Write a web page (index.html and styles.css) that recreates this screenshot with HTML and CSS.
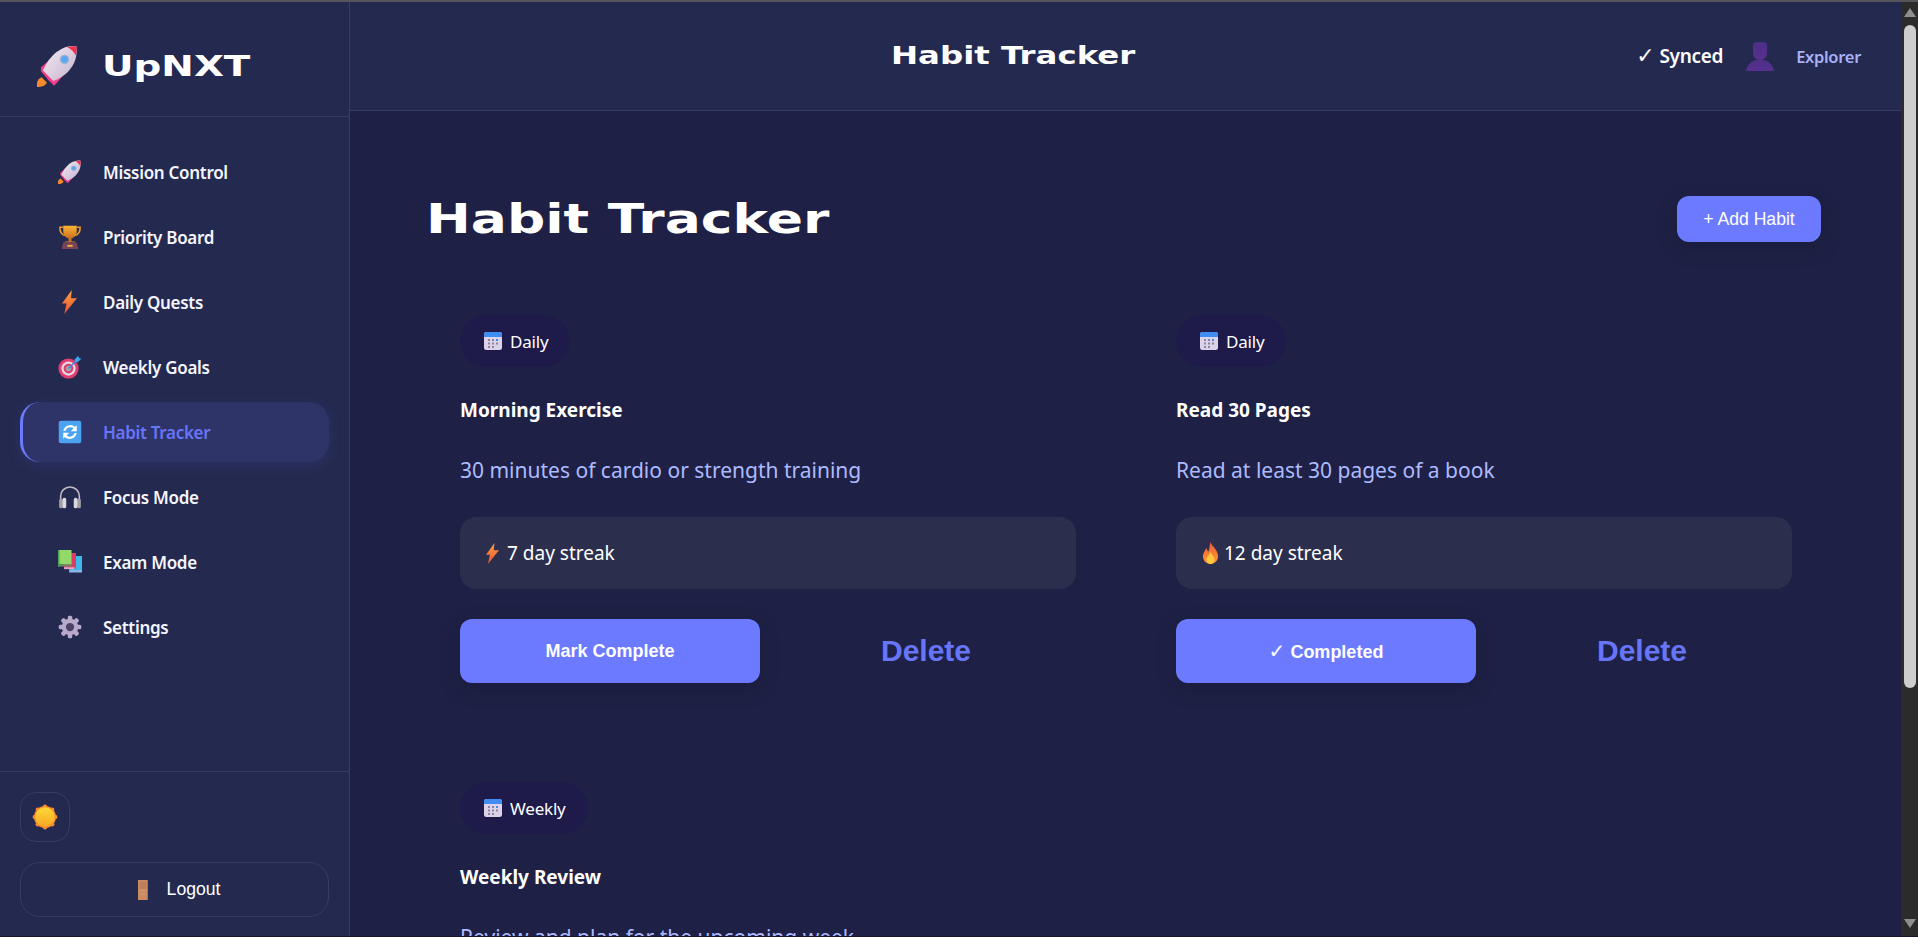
FILE: index.html
```html
<!DOCTYPE html>
<html lang="en">
<head>
    <meta charset="UTF-8">
    <meta name="viewport" content="width=device-width, initial-scale=1.0">
    <title>UpNXT - Habit Tracker</title>
    <link rel="stylesheet" href="styles.css">
</head>
<body>
    <svg class="icon-defs" xmlns="http://www.w3.org/2000/svg">
        <defs>
            <linearGradient id="g-body" x1="0" y1="0" x2="1" y2="1"><stop offset="0" stop-color="#f4ecf4"/><stop offset="1" stop-color="#c4b2cc"/></linearGradient>
            <linearGradient id="g-bolt" x1="0" y1="0" x2="0" y2="1"><stop offset="0" stop-color="#ffa23a"/><stop offset="1" stop-color="#e8503a"/></linearGradient>
            <linearGradient id="g-gold" x1="0" y1="0" x2="0" y2="1"><stop offset="0" stop-color="#fcb437"/><stop offset="1" stop-color="#c9701c"/></linearGradient>
            <linearGradient id="g-sun" x1="0" y1="0" x2="0" y2="1"><stop offset="0" stop-color="#fdd835"/><stop offset="1" stop-color="#f9a825"/></linearGradient>
            <linearGradient id="g-flame" x1="0" y1="0" x2="0" y2="1"><stop offset="0" stop-color="#ef5a3c"/><stop offset="1" stop-color="#ff9a2e"/></linearGradient>
            <linearGradient id="g-user" x1="0" y1="0" x2="0" y2="1"><stop offset="0" stop-color="#4d2e86"/><stop offset="1" stop-color="#57308f"/></linearGradient>
        </defs>
        <symbol id="i-rocket" viewBox="0 0 32 32">
            <path d="M0 32c-.5-3.500 .5-6.500 3.500-7.500l4 4c-1 2.500-4 3.500-7.500 3.500z" fill="#f58a2a"/>
            <path d="M3 17l7-6-1 10 3 3-3 3-6-7z" fill="#f23d86"/>
            <path d="M15 29l6-7-10 1-3 3 5 5z" fill="#ef3f8e"/>
            <path d="M30 1c1 7-1 14-6.500 19.500C20 24 16 26 12.500 27.500l-8-8C6 16 8 12 11.500 8.500 17 3 23 0 30 1z" fill="url(#g-body)"/>
            <path d="M23 1.800c2.300-.8 4.700-1.100 7-.8 .4 2.300 .2 4.700-.5 7-1.200-2.600-3.500-4.900-6.500-6.200z" fill="#f0304f"/>
            <circle cx="21" cy="11" r="3.600" fill="#9fb0d8"/>
            <circle cx="21" cy="11" r="2.600" fill="#5aa9f0"/>
        </symbol>
        <symbol id="i-trophy" viewBox="0 0 32 32">
            <path d="M7 3H2.500c0 7 2 10 7 11M25 3h4.500c0 7-2 10-7 11" fill="none" stroke="#e79a28" stroke-width="2.200"/>
            <path d="M7 1h18v7c0 6-4 10-9 10S7 14 7 8z" fill="url(#g-gold)"/>
            <rect x="14" y="17" width="4" height="5" fill="#c9701c"/>
            <path d="M10 22h12l1 1H9z" fill="#e79a28"/>
            <path d="M7 23h18l2 9H5z" fill="#7a4258"/>
            <rect x="12.500" y="26.500" width="7" height="2.500" fill="#f2b33d"/>
        </symbol>
        <symbol id="i-bolt" viewBox="0 0 20 32">
            <path d="M13 0L0 18h6L3 32l17-21h-8z" fill="url(#g-bolt)"/>
        </symbol>
        <symbol id="i-target" viewBox="0 0 32 32">
            <circle cx="14" cy="18" r="13.500" fill="#e23d6f"/>
            <circle cx="14" cy="18" r="9.500" fill="#e6dbe6"/>
            <circle cx="14" cy="18" r="6.500" fill="#d9446f"/>
            <circle cx="14" cy="18" r="3.500" fill="#a9a1b0"/>
            <path d="M14 18L27 5" stroke="#3f8fd8" stroke-width="2.200"/>
            <path d="M22 6l5-5 1 3 3 1-5 5-3-1z" fill="#3fa4ee"/>
        </symbol>
        <symbol id="i-sync" viewBox="0 0 32 32">
            <rect x="1" y="1" width="30" height="30" rx="3" fill="#4ba3f2"/>
            <path d="M8.500 14.500a8 7.500 0 0 1 13.500-4" fill="none" stroke="#fff" stroke-width="3"/>
            <path d="M25 7v8h-8z" fill="#fff"/>
            <path d="M23.500 17.500a8 7.500 0 0 1-13.500 4" fill="none" stroke="#fff" stroke-width="3"/>
            <path d="M7 25v-8h8z" fill="#fff"/>
        </symbol>
        <symbol id="i-headphones" viewBox="0 0 32 32">
            <path d="M3.500 21V15a12.500 12.500 0 0 1 25 0v6" fill="none" stroke="#c4c0c8" stroke-width="2"/>
            <rect x="1.500" y="18" width="5" height="13" rx="2.500" fill="#a09da6"/>
            <rect x="25.500" y="18" width="5" height="13" rx="2.500" fill="#a09da6"/>
            <rect x="6" y="17" width="5" height="14" rx="2.500" fill="#dcd8de"/>
            <rect x="21" y="17" width="5" height="14" rx="2.500" fill="#dcd8de"/>
        </symbol>
        <symbol id="i-books" viewBox="0 0 32 32">
            <rect x="15" y="8" width="17" height="21" fill="#3fb8ea"/>
            <rect x="15" y="27" width="17" height="3" fill="#8fb6e4"/>
            <rect x="8" y="4" width="16" height="21" fill="#dc3b68"/>
            <rect x="8" y="23" width="14" height="2.500" fill="#e6a5c0"/>
            <rect x="0" y="0" width="18" height="19" fill="#93d96a"/>
            <rect x="0" y="19" width="18" height="3" fill="#6d8f60"/>
            <rect x="0" y="0" width="2" height="22" fill="#4da35a"/>
        </symbol>
        <symbol id="i-gear" viewBox="0 0 32 32">
            <g fill="#b9aacb">
                <rect x="13" y="1" width="6" height="30" rx="2"/>
                <rect x="13" y="1" width="6" height="30" rx="2" transform="rotate(45 16 16)"/>
                <rect x="13" y="1" width="6" height="30" rx="2" transform="rotate(90 16 16)"/>
                <rect x="13" y="1" width="6" height="30" rx="2" transform="rotate(135 16 16)"/>
                <circle cx="16" cy="16" r="11"/>
            </g>
            <circle cx="16" cy="16" r="5.500" fill="#4c4468"/>
        </symbol>
        <symbol id="i-sun" viewBox="0 0 32 32">
            <g fill="#f58a2f">
                <circle cx="16" cy="16" r="13.500"/><circle cx="16" cy="3.500" r="2.800"/><circle cx="16" cy="28.500" r="2.800"/><circle cx="3.500" cy="16" r="2.800"/><circle cx="28.500" cy="16" r="2.800"/>
                <circle cx="7.200" cy="7.200" r="2.800"/><circle cx="24.800" cy="7.200" r="2.800"/><circle cx="7.200" cy="24.800" r="2.800"/><circle cx="24.800" cy="24.800" r="2.800"/>
            </g>
            <circle cx="16" cy="16" r="12" fill="url(#g-sun)"/>
        </symbol>
        <symbol id="i-door" viewBox="0 0 14 24">
            <rect x="1" y="0" width="12" height="24" fill="#c98a64"/>
            <rect x="3" y="2" width="8" height="9" fill="#bd7f5b"/>
            <path d="M3 12.500h9M3 17h9" stroke="#e0a278" stroke-width=".8"/>
            <rect x="12" y="0" width="1" height="24" fill="#a86c4a"/>
        </symbol>
        <symbol id="i-calendar" viewBox="0 0 20 20">
            <rect x="1" y="1" width="18" height="18" rx="2.500" fill="#dcd3e8"/>
            <path d="M1 6V3.500A2.500 2.500 0 0 1 3.500 1h13A2.500 2.500 0 0 1 19 3.500V6z" fill="#3f8df0"/>
            <g fill="#8b84a0">
                <rect x="5" y="8" width="2" height="2"/><rect x="9" y="8" width="2" height="2"/><rect x="13" y="8" width="2" height="2" fill="#3f8df0"/>
                <rect x="5" y="11.500" width="2" height="2"/><rect x="9" y="11.500" width="2" height="2"/><rect x="13" y="11.500" width="2" height="2"/>
                <rect x="5" y="15" width="2" height="2"/><rect x="9" y="15" width="2" height="2"/>
            </g>
        </symbol>
        <symbol id="i-flame" viewBox="0 0 16 22">
            <path d="M8 0c1 4 7 7 7.500 13.500C16 18 12.500 22 8 22s-8-4-7.500-8.500C1 10 3 8 4 6c.5 2 1 3 2 3.500C7 7 7 3 8 0z" fill="url(#g-flame)"/>
            <path d="M8 10c1 3 4 4 4 7.500 0 2.500-2 4.500-4 4.500s-4-2-4-4.500C4 15 7 13 8 10z" fill="#ffc93f"/>
        </symbol>
        <symbol id="i-user" viewBox="0 0 28 29">
            <path d="M7 3c0-2 2-3 4-3h6c2 0 4 1 4 3v8c0 4-3 7-7 7s-7-3-7-7z" fill="url(#g-user)"/>
            <path d="M0 29c1-6 5-10 10-11h8c5 1 9 5 10 11z" fill="url(#g-user)"/>
        </symbol>
    </svg>

    <div class="window-edge"></div>
    <div class="window">
        <aside class="sidebar">
            <div class="brand">
                <svg class="brand-icon"><use href="#i-rocket"/></svg>
                <span class="brand-name">UpNXT</span>
            </div>
            <nav class="nav">
                <a class="nav-item"><span class="nav-icon"><svg class="icon-24"><use href="#i-rocket"/></svg></span>Mission Control</a>
                <a class="nav-item"><span class="nav-icon"><svg class="icon-24"><use href="#i-trophy"/></svg></span>Priority Board</a>
                <a class="nav-item"><span class="nav-icon"><svg class="icon-bolt"><use href="#i-bolt"/></svg></span>Daily Quests</a>
                <a class="nav-item"><span class="nav-icon"><svg class="icon-24"><use href="#i-target"/></svg></span>Weekly Goals</a>
                <a class="nav-item active"><span class="nav-icon"><svg class="icon-24"><use href="#i-sync"/></svg></span>Habit Tracker</a>
                <a class="nav-item"><span class="nav-icon"><svg class="icon-24"><use href="#i-headphones"/></svg></span>Focus Mode</a>
                <a class="nav-item"><span class="nav-icon"><svg class="icon-24"><use href="#i-books"/></svg></span>Exam Mode</a>
                <a class="nav-item"><span class="nav-icon"><svg class="icon-24"><use href="#i-gear"/></svg></span>Settings</a>
            </nav>
            <div class="sidebar-footer">
                <button class="theme-btn"><svg class="icon-sun"><use href="#i-sun"/></svg></button>
                <button class="logout-btn"><svg class="icon-door"><use href="#i-door"/></svg>Logout</button>
            </div>
        </aside>

        <div class="main">
            <header class="topbar">
                <div class="topbar-spacer"></div>
                <div class="topbar-title"><span>Habit Tracker</span></div>
                <div class="topbar-right">
                    <span class="synced"><span class="check">✓</span> Synced</span>
                    <svg class="avatar"><use href="#i-user"/></svg>
                    <span class="username">Explorer</span>
                </div>
            </header>

            <main class="content">
                <div class="page-head">
                    <h1 class="page-title"><span>Habit Tracker</span></h1>
                    <button class="add-btn">+ Add Habit</button>
                </div>

                <div class="habit-grid">
                    <section class="habit-card">
                        <span class="pill"><svg class="icon-pill"><use href="#i-calendar"/></svg>Daily</span>
                        <h3 class="habit-name">Morning Exercise</h3>
                        <p class="habit-desc">30 minutes of cardio or strength training</p>
                        <div class="streak"><svg class="icon-streak-bolt"><use href="#i-bolt"/></svg>7 day streak</div>
                        <div class="habit-actions">
                            <button class="complete-btn">Mark Complete</button>
                            <button class="delete-btn">Delete</button>
                        </div>
                    </section>
                    <section class="habit-card">
                        <span class="pill"><svg class="icon-pill"><use href="#i-calendar"/></svg>Daily</span>
                        <h3 class="habit-name">Read 30 Pages</h3>
                        <p class="habit-desc">Read at least 30 pages of a book</p>
                        <div class="streak"><svg class="icon-streak-flame"><use href="#i-flame"/></svg>12 day streak</div>
                        <div class="habit-actions">
                            <button class="complete-btn"><span class="check-bold">✓</span> Completed</button>
                            <button class="delete-btn">Delete</button>
                        </div>
                    </section>
                    <section class="habit-card">
                        <span class="pill"><svg class="icon-pill"><use href="#i-calendar"/></svg>Weekly</span>
                        <h3 class="habit-name">Weekly Review</h3>
                        <p class="habit-desc">Review and plan for the upcoming week</p>
                    </section>
                </div>
            </main>
        </div>

        <div class="scrollbar">
            <span class="arrow-up"></span>
            <span class="thumb"></span>
            <span class="arrow-down"></span>
        </div>
    </div>
    <div class="window-bottom"></div>
</body>
</html>
```

FILE: styles.css
```css
* {
    box-sizing: border-box;
}
html, body {
    height: 100%;
}
body {
    margin: 0;
    display: flex;
    flex-direction: column;
    overflow: hidden;
    background-color: #1e2145;
    color: #ffffff;
    font-family: "Noto Sans", "Open Sans", sans-serif;
}
button {
    font-family: "Liberation Sans", Arial, sans-serif;
    color: #ffffff;
    border: none;
    cursor: pointer;
}
.icon-defs {
    display: block;
    width: 0;
    height: 0;
}
.window-edge {
    height: 2px;
    flex-shrink: 0;
    background-color: #55555a;
}
.window-bottom {
    height: 1px;
    flex-shrink: 0;
    background-color: #15162a;
}
.window {
    flex: 1;
    display: flex;
    min-height: 0;
}

/* sidebar */
.sidebar {
    width: 350px;
    flex-shrink: 0;
    display: flex;
    flex-direction: column;
    background-color: #24294f;
    border-right: 1px solid #383c66;
}
.brand {
    height: 115px;
    flex-shrink: 0;
    display: flex;
    align-items: center;
    padding: 14px 0 0 37px;
    gap: 23px;
    border-bottom: 1px solid #383c66;
}
.brand-icon {
    width: 42px;
    height: 42px;
}
.brand-name {
    font-family: "DejaVu Sans", sans-serif;
    font-weight: 700;
    font-size: 29px;
    transform: scaleX(1.34);
    transform-origin: left center;
}
.nav {
    flex: 1;
    display: flex;
    flex-direction: column;
    gap: 5px;
    padding: 25px 20px 0;
}
.nav-item {
    height: 60px;
    display: flex;
    align-items: center;
    padding-left: 38px;
    border-radius: 20px;
    font-size: 17px;
    font-weight: 600;
    letter-spacing: -0.3px;
    color: #f4f5ff;
}
.nav-item.active {
    background-color: #2f3468;
    color: #6775f8;
    border-left: 3px solid #6c7aff;
    padding-left: 35px;
    box-shadow: 0 4px 15px rgba(108, 122, 255, 0.12);
}
.nav-icon {
    width: 45px;
    display: flex;
    align-items: center;
    flex-shrink: 0;
}
.icon-24 {
    width: 24px;
    height: 24px;
}
.icon-bolt {
    width: 15px;
    height: 24px;
    margin-left: 4px;
}
.sidebar-footer {
    display: flex;
    flex-direction: column;
    align-items: flex-start;
    gap: 20px;
    padding: 20px 20px 19px;
    border-top: 1px solid #383c66;
}
.theme-btn {
    width: 50px;
    height: 50px;
    display: flex;
    align-items: center;
    justify-content: center;
    padding: 0;
    background: transparent;
    border: 1px solid #383c66;
    border-radius: 16px;
}
.icon-sun {
    width: 26px;
    height: 26px;
}
.logout-btn {
    width: 100%;
    height: 55px;
    display: flex;
    align-items: center;
    justify-content: center;
    gap: 17px;
    background: transparent;
    border: 1px solid #383c66;
    border-radius: 20px;
    font-size: 17.6px;
}
.icon-door {
    width: 14px;
    height: 20px;
    margin-left: 7px;
}

/* top bar */
.main {
    flex: 1;
    min-width: 0;
    display: flex;
    flex-direction: column;
}
.topbar {
    height: 109px;
    flex-shrink: 0;
    display: flex;
    align-items: center;
    justify-content: space-between;
    padding: 0 40px;
    background-color: #24294f;
    border-bottom: 1px solid #383c66;
}
.topbar-title {
    width: 244px;
    font-family: "DejaVu Sans", sans-serif;
    font-weight: 700;
    font-size: 24px;
    white-space: nowrap;
}
.topbar-title span {
    display: inline-block;
    transform: scaleX(1.35);
    transform-origin: left center;
}
.topbar-right {
    display: flex;
    align-items: center;
}
.synced {
    font-size: 19px;
    font-weight: 600;
    letter-spacing: -0.3px;
}
.check {
    font-family: "DejaVu Sans", sans-serif;
    font-weight: 400;
    font-size: 22px;
    letter-spacing: 0;
}
.check-bold {
    font-family: "DejaVu Sans", sans-serif;
    font-size: 20px;
}
.avatar {
    width: 28px;
    height: 29px;
    margin: 0 22px 0 23px;
}
.username {
    font-size: 16.5px;
    font-weight: 600;
    letter-spacing: -0.3px;
    color: #a8b0f8;
}

/* page */
.content {
    flex: 1;
    min-height: 0;
    overflow: hidden;
    padding: 85px 80px 0 78px;
}
.page-head {
    display: flex;
    align-items: center;
    justify-content: space-between;
    height: 46px;
}
.page-title {
    margin: 0 0 0 -2px;
    font-family: "DejaVu Sans", sans-serif;
    font-weight: 700;
    font-size: 41px;
    white-space: nowrap;
}
.page-title span {
    display: inline-block;
    transform: scaleX(1.305);
    transform-origin: left center;
}
.add-btn {
    width: 144px;
    height: 46px;
    background-color: #6c7aff;
    border-radius: 12px;
    font-size: 17.6px;
    box-shadow: 0 6px 18px rgba(20, 22, 50, 0.45);
}
.habit-grid {
    display: grid;
    grid-template-columns: 680px 680px;
    column-gap: 36px;
    row-gap: 35px;
    margin-top: 41px;
}
.habit-card {
    padding: 32px;
}
.pill {
    display: inline-flex;
    align-items: center;
    gap: 7px;
    height: 52px;
    padding: 0 22px 0 23px;
    border-radius: 26px;
    background-color: #1e1a4a;
    font-size: 17px;
    letter-spacing: -0.2px;
}
.icon-pill {
    width: 20px;
    height: 20px;
}
.habit-name {
    margin: 29px 0 0;
    font-size: 19px;
    font-weight: 700;
    line-height: 28px;
}
.habit-desc {
    margin: 31px 0 0;
    font-size: 21px;
    line-height: 30px;
    color: #aebaff;
}
.streak {
    display: flex;
    align-items: center;
    height: 72px;
    margin-top: 32px;
    padding-left: 26px;
    border-radius: 16px;
    background-color: #2c2e4e;
    font-size: 19px;
}
.icon-streak-bolt {
    width: 13px;
    height: 21px;
    margin-right: 8px;
}
.icon-streak-flame {
    width: 17px;
    height: 22px;
    margin-right: 5px;
}
.habit-actions {
    display: grid;
    grid-template-columns: 1fr 1fr;
    gap: 16px;
    margin-top: 30px;
}
.complete-btn {
    height: 64px;
    background-color: #6c7aff;
    border-radius: 12px;
    font-size: 18px;
    font-weight: 700;
    box-shadow: 0 6px 18px rgba(20, 22, 50, 0.45);
}
.delete-btn {
    height: 64px;
    background: transparent;
    color: #6775f8;
    font-size: 30px;
    font-weight: 700;
}

/* scrollbar */
.scrollbar {
    width: 17px;
    flex-shrink: 0;
    display: flex;
    flex-direction: column;
    align-items: center;
    padding: 6px 0 8px;
    background-color: #2b2b2b;
}
.arrow-up {
    width: 0;
    height: 0;
    border-left: 6px solid transparent;
    border-right: 6px solid transparent;
    border-bottom: 9px solid #8f8f8f;
}
.thumb {
    width: 12px;
    height: 663px;
    margin-top: 8px;
    border-radius: 6px;
    background-color: #cdcdcd;
}
.arrow-down {
    width: 0;
    height: 0;
    margin-top: auto;
    border-left: 6px solid transparent;
    border-right: 6px solid transparent;
    border-top: 9px solid #8f8f8f;
}
```
